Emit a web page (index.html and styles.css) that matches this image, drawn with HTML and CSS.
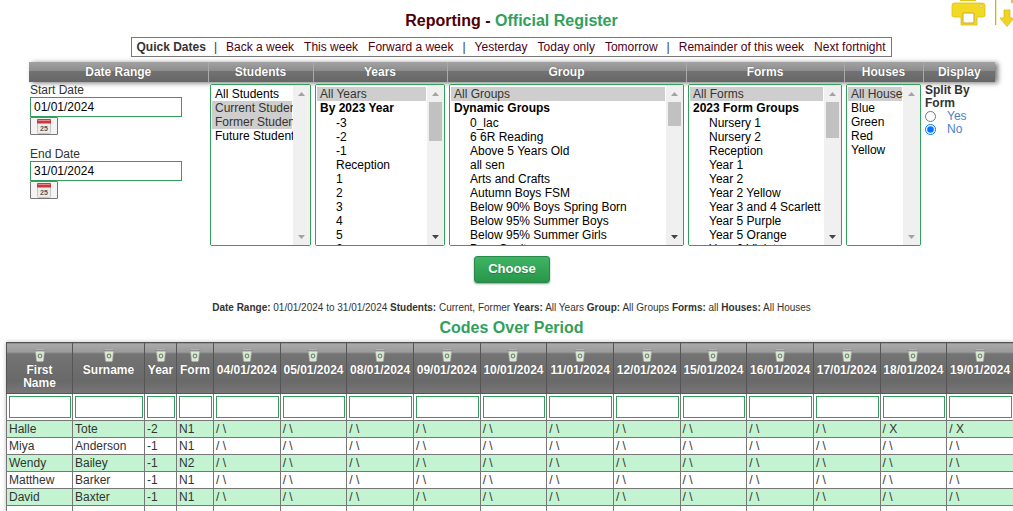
FILE: index.html
```html
<!DOCTYPE html>
<html lang="en">
<head>
  <meta charset="UTF-8">
  <meta name="viewport" content="width=device-width, initial-scale=1.0">
  <title>Reporting - Official Register</title>
  <link rel="stylesheet" href="styles.css">
</head>
<body>
<!-- Shared icons -->
<svg class="symbols" aria-hidden="true">
  <symbol id="icon-bin" viewBox="0 0 12 14">
    <path d="M1.500 3h9l-1 9.500q0 1-1 1h-5q-1 0-1-1z" fill="#dfe6da" stroke="#a9b3a4" stroke-width=".6"/>
    <rect x="0.500" y="1" width="11" height="2.200" rx="1" fill="#8d918b"/>
    <rect x="1.500" y="1.200" width="9" height=".8" fill="#b9bdb6"/>
    <circle cx="6" cy="8" r="1.800" fill="none" stroke="#6f9569" stroke-width="1.200"/>
  </symbol>
  <symbol id="icon-calendar" viewBox="0 0 14 15">
    <rect x=".5" y=".5" width="13" height="14" rx="1" fill="#ececec" stroke="#c4c4c4"/>
    <path d="M0 1q0-1 1-1h12q1 0 1 1v3.500H0z" fill="#c9393b"/>
    <rect x="1" y="1" width="12" height="1" fill="#e58a8a"/>
    <text x="7" y="12" text-anchor="middle" class="calendar-day">25</text>
  </symbol>
</svg>

<header class="page-header">
  <h1>Reporting - <span>Official Register</span></h1>
  <div class="tools">
    <button type="button" aria-label="Print">
      <svg width="36" height="27" viewBox="0 0 36 27">
        <path d="M10 0h16v1H10z" fill="#e3c51e"/>
        <path d="M4 3h28q3 0 3 3v9q0 2-2 2h-6v8H11v-8H4q-2 0-2-2V6q0-3 2-3z" fill="#f2d923" stroke="#dcbc1c" stroke-width=".8"/>
        <path d="M13 13h11v10H13z" fill="#fff" stroke="#c9ab2a"/>
        <circle cx="31" cy="6" r="1.300" fill="#fff" stroke="#c8a52a" stroke-width=".6"/>
      </svg>
    </button>
    <button type="button" aria-label="Export">
      <svg width="19" height="28" viewBox="0 0 19 28">
        <path d="M1 0h1v25H1z" fill="#d9a63a"/>
        <path d="M2 0h1v25H2z" fill="#f4e7b8"/>
        <path d="M10 10h6v8h4l-7 8.500L6 18h4z" fill="#f0d420" stroke="#d3b11f" stroke-width=".7"/>
        <path d="M17 0h2v3h-2z" fill="#e6c822"/>
      </svg>
    </button>
  </div>
</header>

<div class="quick-bar">
  <nav class="quick-dates">
    <strong>Quick Dates</strong>
    <span>|</span>
    <a href="#">Back a week</a>
    <a href="#">This week</a>
    <a href="#">Forward a week</a>
    <span>|</span>
    <a href="#">Yesterday</a>
    <a href="#">Today only</a>
    <a href="#">Tomorrow</a>
    <span>|</span>
    <a href="#">Remainder of this week</a>
    <a href="#">Next fortnight</a>
  </nav>
</div>

<form id="filter-form">
  <table class="filters">
    <colgroup>
      <col class="col-dates">
      <col class="col-students">
      <col class="col-years">
      <col class="col-group">
      <col class="col-forms">
      <col class="col-houses">
      <col>
    </colgroup>
    <thead>
      <tr>
        <th>Date Range</th>
        <th id="students-label">Students</th>
        <th id="years-label">Years</th>
        <th id="group-label">Group</th>
        <th id="forms-label">Forms</th>
        <th id="houses-label">Houses</th>
        <th>Display</th>
      </tr>
    </thead>
    <tbody>
      <tr>
        <td class="dates">
          <div class="date-field">
            <label for="start-date">Start Date</label>
            <input type="text" id="start-date" value="01/01/2024">
            <button type="button" aria-label="Pick start date"><svg width="14" height="15"><use href="#icon-calendar"/></svg></button>
          </div>
          <div class="date-field">
            <label for="end-date">End Date</label>
            <input type="text" id="end-date" value="31/01/2024">
            <button type="button" aria-label="Pick end date"><svg width="14" height="15"><use href="#icon-calendar"/></svg></button>
          </div>
        </td>
        <td>
          <div class="list">
            <select multiple aria-labelledby="students-label">
              <option>All Students</option>
              <option selected>Current Students</option>
              <option selected>Former Students</option>
              <option>Future Students</option>
            </select>
          </div>
        </td>
        <td>
          <div class="list">
            <select multiple id="year-list" aria-labelledby="years-label">
              <option selected>All Years</option>
              <optgroup label="By 2023 Year">
                <option>-3</option>
                <option>-2</option>
                <option>-1</option>
                <option>Reception</option>
              </optgroup>
            </select>
          </div>
        </td>
        <td>
          <div class="list">
            <select multiple id="group-list" aria-labelledby="group-label">
              <option selected>All Groups</option>
              <optgroup label="Dynamic Groups">
                <option>0_lac</option>
                <option>6 6R Reading</option>
                <option>Above 5 Years Old</option>
                <option>all sen</option>
                <option>Arts and Crafts</option>
                <option>Autumn Boys FSM</option>
                <option>Below 90% Boys Spring Born</option>
                <option>Below 95% Summer Boys</option>
                <option>Below 95% Summer Girls</option>
                <option>Born Onsite</option>
              </optgroup>
            </select>
          </div>
        </td>
        <td>
          <div class="list">
            <select multiple id="form-list" aria-labelledby="forms-label">
              <option selected>All Forms</option>
              <optgroup label="2023 Form Groups">
                <option>Nursery 1</option>
                <option>Nursery 2</option>
                <option>Reception</option>
                <option>Year 1</option>
                <option>Year 2</option>
                <option>Year 2 Yellow</option>
                <option>Year 3 and 4 Scarlett</option>
                <option>Year 5 Purple</option>
                <option>Year 5 Orange</option>
                <option>Year 6 Violet</option>
              </optgroup>
            </select>
          </div>
        </td>
        <td>
          <div class="list">
            <select multiple aria-labelledby="houses-label">
              <option selected>All Houses</option>
              <option>Blue</option>
              <option>Green</option>
              <option>Red</option>
              <option>Yellow</option>
            </select>
          </div>
        </td>
        <td>
          <fieldset class="split">
            <legend>Split By Form</legend>
            <label><input type="radio" name="split" value="yes"> Yes</label>
            <label><input type="radio" name="split" value="no" checked> No</label>
          </fieldset>
        </td>
      </tr>
    </tbody>
  </table>
  <button type="submit" class="choose-btn">Choose</button>
</form>

<p class="summary">
  <b>Date Range:</b> 01/01/2024 to 31/01/2024 <b>Students:</b> Current, Former <b>Years:</b> All Years <b>Group:</b> All Groups <b>Forms:</b> all <b>Houses:</b> All Houses
</p>

<h2>Codes Over Period</h2>

<table class="register">
  <colgroup>
    <col class="col-first">
    <col class="col-surname">
    <col class="col-year">
    <col class="col-form">
  </colgroup>
  <thead>
    <tr id="register-head"></tr>
    <tr id="register-search" class="search"></tr>
  </thead>
  <tbody id="register-body"></tbody>
</table>

<script>
  const columns = ["First Name", "Surname", "Year", "Form"];
  const dates = ["04", "05", "08", "09", "10", "11", "12", "15", "16", "17", "18", "19"];
  const students = [
    { details: ["Halle", "Tote", "-2", "N1"], absent: ["18", "19"] },
    { details: ["Miya", "Anderson", "-1", "N1"], absent: [] },
    { details: ["Wendy", "Bailey", "-1", "N2"], absent: [] },
    { details: ["Matthew", "Barker", "-1", "N1"], absent: [] },
    { details: ["David", "Baxter", "-1", "N1"], absent: [] },
    { details: ["", "", "", ""] },
  ];

  // Headings and the search box under each one
  const head = document.getElementById("register-head");
  const search = document.getElementById("register-search");
  columns.concat(dates.map((day) => `${day}/01/2024`)).forEach((title) => {
    head.innerHTML += `<th><svg width="12" height="14"><use href="#icon-bin"/></svg>${title}</th>`;
    search.innerHTML += `<td><input type="text" aria-label="Search ${title}"></td>`;
  });

  // One row per student
  const body = document.getElementById("register-body");
  students.forEach((student) => {
    const row = body.insertRow();
    student.details.forEach((value) => {
      row.insertCell().textContent = value;
    });
    dates.forEach((day) => {
      const code = student.absent?.includes(day) ? "/ X" : "/ \\";
      row.insertCell().textContent = student.absent ? code : "";
    });
  });

  // The remaining entries of the long lists
  function fillList(id, prefix, count) {
    const group = document.querySelector(`#${id} optgroup`);
    for (let i = 1; i <= count; i++) {
      const option = document.createElement("option");
      option.textContent = `${prefix}${i}`;
      group.appendChild(option);
    }
  }
  fillList("year-list", "", 31);
  fillList("group-list", "Group ", 48);
  fillList("form-list", "Form ", 28);

  // Scrollbar beside each list
  document.querySelectorAll(".list").forEach((list) => {
    const select = list.querySelector("select");
    const bar = document.createElement("div");
    bar.className = "scrollbar";
    bar.setAttribute("aria-hidden", "true");
    bar.innerHTML = '<i class="arrow up"></i><div class="track"><div class="thumb"></div></div><i class="arrow down"></i>';
    list.appendChild(bar);

    const track = bar.querySelector(".track");
    const thumb = bar.querySelector(".thumb");
    const update = () => {
      const fits = select.scrollHeight <= select.clientHeight;
      const scale = track.clientHeight / select.scrollHeight;
      const atEnd = select.scrollTop + select.clientHeight >= select.scrollHeight;
      thumb.style.height = fits ? "0" : `${Math.round(select.clientHeight * scale)}px`;
      thumb.style.marginTop = `${Math.round(select.scrollTop * scale)}px`;
      bar.querySelector(".up").classList.toggle("active", select.scrollTop > 0);
      bar.querySelector(".down").classList.toggle("active", !fits && !atEnd);
    };
    select.addEventListener("scroll", update);
    update();
  });
</script>
</body>
</html>
```

FILE: styles.css
```css
html {
  overflow: hidden;
}
body {
  margin: 0;
  font-family: Arial, "Liberation Sans", sans-serif;
  font-size: 12px;
  line-height: 13px;
  color: #333;
  background: #fff;
}
input, select, button {
  box-sizing: border-box;
  font-family: inherit;
  font-size: 12px;
}
.symbols {
  display: none;
}

/* Title and tools */
.page-header {
  display: grid;
  grid-template-columns: 1fr auto 1fr;
  height: 37px;
  padding-left: 10px;
}
h1, h2 {
  margin: 0;
  font-size: 16px;
  line-height: 18px;
}
h1 {
  grid-column: 2;
  padding-top: 12px;
  color: #4d0005;
}
h1 span, h2 {
  color: #32a05a;
}
.tools {
  display: flex;
  justify-content: flex-end;
  align-items: flex-start;
  gap: 8px;
}
.tools button {
  padding: 0;
  border: 0;
  background: none;
}
.tools svg {
  display: block;
}

/* Quick dates bar */
.quick-bar {
  display: flex;
  justify-content: center;
  padding-left: 10px;
}
.quick-dates {
  display: flex;
  gap: 8px;
  padding: 3px 5px 2px;
  border: 1px solid #777;
}
.quick-dates a {
  padding: 0 1px;
  color: #4d0014;
  text-decoration: none;
}

/* Filters */
#filter-form {
  padding: 5px 18px 0 29px;
}
.filters {
  width: 100%;
  table-layout: fixed;
  border-collapse: collapse;
}
.filters thead {
  box-shadow: 3px 1px 5px #777;
}
.filters th {
  height: 20px;
  padding: 0;
  color: #fff;
  background: linear-gradient(#a2a2a2, #8c8c8c 45%, #727272 46%, #666);
  text-shadow: 0 0 1px #444;
}
.filters th + th {
  border-left: 1px solid #aaa;
}
.filters td {
  padding: 2px 2px 0 2px;
  vertical-align: top;
}
.filters .dates {
  padding-left: 1px;
}
.col-dates { width: 179px; }
.col-students { width: 105px; }
.col-years { width: 134px; }
.col-group { width: 239px; }
.col-forms { width: 158px; }
.col-houses { width: 79px; }

.date-field {
  display: flex;
  flex-direction: column;
  align-items: flex-start;
  margin-bottom: 13px;
}
.date-field input {
  width: 152px;
  height: 20px;
  padding: 0 3px;
  border: 1px solid #32a05a;
  color: #000;
}
.date-field button {
  display: flex;
  justify-content: center;
  width: 28px;
  height: 18px;
  padding: 1px 0 0;
  border: 1px solid #777;
  border-radius: 1px;
  background: #f4f4f4;
}
.calendar-day {
  font-size: 7px;
  font-weight: bold;
  fill: #555;
}

/* List boxes */
.list {
  display: flex;
  height: 160px;
  border: 1px solid #32a05a;
  border-radius: 2px;
  overflow: hidden;
}
select {
  flex: 1;
  width: 0;
  min-width: 0;
  height: 100%;
  padding: 2px 1px 0 1px;
  border: 0;
  border-radius: 0;
  outline: none;
  color: #000;
  background: #fff;
  scrollbar-width: none;
}
select option {
  min-height: 14px;
  padding: 0 0 0 3px;
  line-height: 14px;
}
select optgroup {
  padding-left: 1px;
  line-height: 14px;
}
select optgroup option {
  padding-left: 18px;
}
select option:checked {
  color: #333;
  background: #cecece linear-gradient(#cecece, #cecece);
}
.scrollbar {
  display: flex;
  flex-direction: column;
  flex: none;
  width: 17px;
  background: #f0f0f0;
}
.track {
  flex: 1;
  padding: 0 2px;
}
.thumb {
  background: #c1c1c1;
}
.arrow {
  height: 17px;
  background: #a3a3a3;
  background-clip: content-box;
  box-sizing: border-box;
  padding: 7px 5px 6px;
}
.arrow.up {
  clip-path: polygon(5px 11px, 12px 11px, 50% 7px);
}
.arrow.down {
  clip-path: polygon(5px 7px, 12px 7px, 50% 11px);
}
.arrow.active {
  background-color: #444;
}

.split {
  width: 50px;
  min-width: 0;
  margin: 0;
  padding: 0;
  border: 0;
}
.split legend {
  padding: 0;
  font-weight: bold;
}
.split label {
  display: flex;
  align-items: center;
  gap: 11px;
  color: #4a7fc4;
}
.split input {
  flex: none;
  width: 11px;
  height: 11px;
  margin: 0;
}

.choose-btn {
  display: block;
  margin: 10px auto 0;
  padding: 0 13px 2px;
  height: 27px;
  border: 1px solid #27884a;
  border-radius: 3px;
  font-size: 13px;
  font-weight: bold;
  color: #fff;
  background: linear-gradient(#3fb464, #28964a);
  box-shadow: 0 1px 2px #999;
  text-shadow: 0 1px 1px #277a42;
}

/* Summary */
.summary {
  margin: 18px 0 5px;
  padding-left: 10px;
  font-size: 10px;
  text-align: center;
}
h2 {
  padding-left: 10px;
  text-align: center;
}

/* Register */
.register {
  width: calc(100% - 5px);
  margin: 5px 0 0 6px;
  table-layout: fixed;
  border-collapse: collapse;
  box-shadow: 0 0 4px #bbb;
}
.register th, .register td {
  border: 1px solid #777;
}
.register th {
  height: 51px;
  box-sizing: border-box;
  padding: 5px 2px 0;
  vertical-align: top;
  color: #fff;
  border-color: #555;
  background: linear-gradient(#aaa, #9a9a9a 9px, #747474 10px, #696969 75%, #777);
  text-shadow: 0 0 1px #444;
}
.register th svg {
  display: block;
  margin: 0 auto 2px;
}
.register td {
  height: 16px;
  padding: 0 2px;
  line-height: 16px;
}
.register .search td {
  height: 26px;
  padding: 0 1px 0 2px;
}
.search input {
  display: block;
  width: 100%;
  height: 22px;
  border: 1px solid #32a05a;
}
.register tbody tr:nth-child(odd) {
  background: #c3f3d1;
}
.col-first { width: 66px; }
.col-surname { width: 72px; }
.col-year { width: 32px; }
.col-form { width: 37px; }
```
